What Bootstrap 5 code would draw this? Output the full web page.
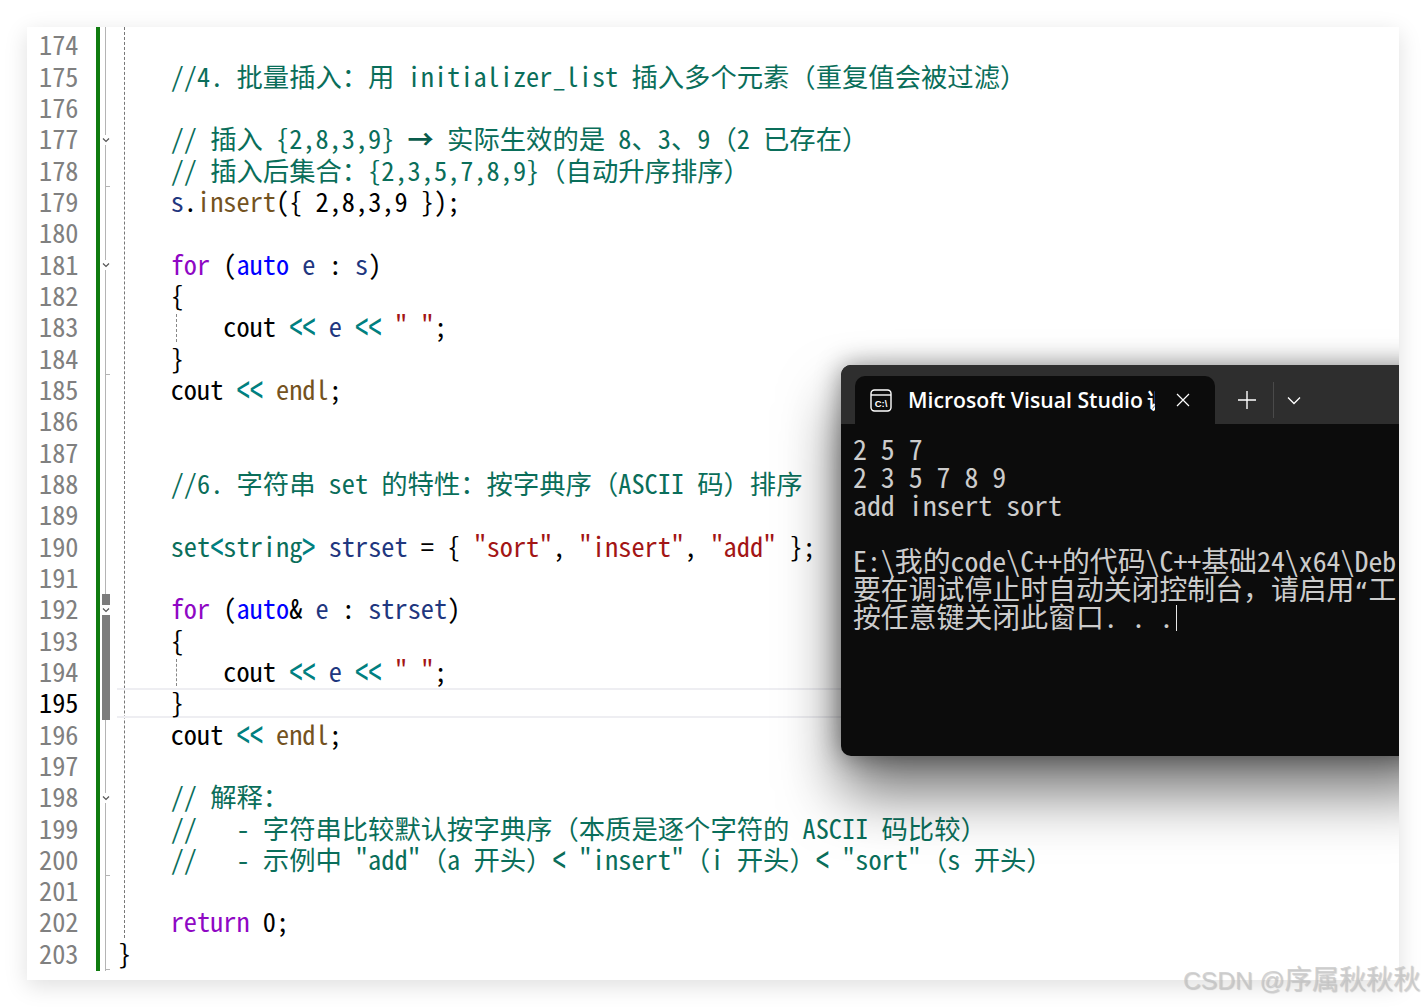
<!doctype html>
<html lang="zh"><head><meta charset="utf-8"><title>Code</title>
<link href="https://cdn.jsdelivr.net/npm/bootstrap@5.3.0/dist/css/bootstrap.min.css" rel="stylesheet">
<style>
html,body{background:#fff;overflow:hidden}
.shot{padding:27px;height:1007px;position:relative}
.pane{height:953px;position:relative;overflow:hidden;background:#fff}
.shade{box-shadow:0 6px 22px rgba(0,0,0,.13)}
.ed{font-family:"Noto Sans Mono CJK SC","DejaVu Sans Mono",monospace;font-size:26.34px;color:#000;height:944px}
.nums{width:69px;padding:3.3px 0 0 12px;color:#808080}
.nums div,.foldc div,.lines>div{height:31.33px;line-height:27.33px}
.nums .cur{color:#000}
.gbar{width:4px;background:#107c10}
.foldc{width:15px;margin-left:2px;padding-top:3.3px;background:linear-gradient(#b4b4b4,#b4b4b4) 3px 0/1px 100% no-repeat}
.foldc div{width:8px;position:relative}
.foldc .chg{background:#7c7c7c}
.foldc svg{position:absolute;left:0;top:10.6px;background:#fff;display:block}
.foldc .tick::after{content:"";position:absolute;left:3px;bottom:0;width:5px;height:1px;background:#b4b4b4}
.lines{flex:1;padding-top:3.3px;position:relative}
.lines>div{padding-left:1px;position:relative;white-space:pre}
.dash{position:absolute;left:7px;top:0;height:911px;border-left:1px dashed #777}
.guide::before{content:"";position:absolute;left:59px;top:2px;bottom:2px;border-left:1px dashed #888}
.lines>div.curl{height:30px;margin-bottom:1.33px;box-shadow:inset 0 2px 0 #eeeef2,inset 0 -2px 0 #eeeef2}
.cm{color:#0a6e5a}.kw{color:#8f08c4}.ty{color:#0000ff}.vn{color:#1f377f}.fn{color:#74531f}.st{color:#a31515}.op{color:#008080}
.chv{display:inline-block;transform:scaleY(1.55);transform-origin:50% 58%}
.arr{font-weight:700;color:#0a5c4c}
.term{position:absolute;left:814px;top:338px;width:600px;height:391px;background:#0c0c0c;border-radius:10px 0 0 10px;box-shadow:0 36px 60px rgba(0,0,0,.56),0 0 26px rgba(0,0,0,.42)}
.thead{height:59px;background:#2e2e2e;border-radius:10px 0 0 0;padding:11px 0 0 14px;color:#fff}
.ttab{width:360px;height:48px;background:#0c0c0c;border-radius:10px 10px 0 0;padding-left:15px}
.ttitle{width:247px;margin-left:16px;overflow:hidden;white-space:nowrap;font-family:"Open Sans",sans-serif;font-weight:600;font-size:21.2px}
.xclose{margin-left:21px}
.tplus{margin-left:22px}
.tsep{width:1px;height:36px;background:#4a4a4a;margin-left:16px}
.tmore{margin-left:13px}
.tbody{padding:10px 0 0 12px;font-family:"Noto Sans Mono CJK SC","DejaVu Sans Mono",monospace;font-size:27.86px;color:#cccccc;height:332px;overflow:hidden}
.tbody div{height:28px;line-height:28px;white-space:pre}
.lq{font-family:"DejaVu Sans Mono",monospace;font-size:23.14px}
.tcur{display:inline-block;width:1px;height:26px;background:#e8e8e8;vertical-align:top;margin:3px 0 0 3px}
.wmk{position:absolute;left:1183px;top:962px;font-family:"Liberation Sans","Noto Sans CJK SC",sans-serif;font-size:24.6px;line-height:36px;color:rgba(200,200,200,.8);text-shadow:1px 1px 1px rgba(0,0,0,.18);white-space:nowrap}
.wmk span{font-size:27.2px}
</style></head>
<body>
<main class="shot">
<div class="pane shade">
<div class="ed d-flex">
<div class="nums">
<div>174</div><div>175</div><div>176</div><div>177</div><div>178</div><div>179</div><div>180</div><div>181</div><div>182</div><div>183</div><div>184</div><div>185</div><div>186</div><div>187</div><div>188</div><div>189</div><div>190</div><div>191</div><div>192</div><div>193</div><div>194</div><div class="cur">195</div><div>196</div><div>197</div><div>198</div><div>199</div><div>200</div><div>201</div><div>202</div><div>203</div>
</div>
<div class="gbar"></div>
<div class="foldc">
<div></div><div></div><div></div>
<div><svg width="8" height="10" viewBox="0 0 8 10"><path d="M1 3.5 4 6.5 7 3.5" fill="none" stroke="#555" stroke-width="1.2"/></svg></div>
<div class="tick"></div><div></div><div></div>
<div><svg width="8" height="10" viewBox="0 0 8 10"><path d="M1 3.5 4 6.5 7 3.5" fill="none" stroke="#555" stroke-width="1.2"/></svg></div>
<div></div><div></div><div class="tick"></div>
<div></div><div></div><div></div><div></div><div></div><div></div><div></div>
<div class="chg"><svg width="8" height="10" viewBox="0 0 8 10"><path d="M1 3.5 4 6.5 7 3.5" fill="none" stroke="#555" stroke-width="1.2"/></svg></div>
<div class="chg"></div><div class="chg"></div><div class="chg"></div>
<div></div><div></div>
<div><svg width="8" height="10" viewBox="0 0 8 10"><path d="M1 3.5 4 6.5 7 3.5" fill="none" stroke="#555" stroke-width="1.2"/></svg></div>
<div></div><div class="tick"></div><div></div><div></div><div class="tick"></div>
</div>
<div class="lines">
<span class="dash"></span>
<div> </div>
<div>    <span class="cm">//4. 批量插入：用 initializer_list 插入多个元素（重复值会被过滤）</span></div>
<div> </div>
<div>    <span class="cm">// 插入 {2,8,3,9} <span class="arr">→</span> 实际生效的是 8、3、9（2 已存在）</span></div>
<div>    <span class="cm">// 插入后集合：{2,3,5,7,8,9}（自动升序排序）</span></div>
<div>    <span class="vn">s</span>.<span class="fn">insert</span>({ 2,8,3,9 });</div>
<div> </div>
<div>    <span class="kw">for</span> (<span class="ty">auto</span> <span class="vn">e</span> : <span class="vn">s</span>)</div>
<div>    {</div>
<div class="guide">        cout <span class="op chv">&lt;&lt;</span> <span class="vn">e</span> <span class="op chv">&lt;&lt;</span> <span class="st">" "</span>;</div>
<div>    }</div>
<div>    cout <span class="op chv">&lt;&lt;</span> <span class="fn">endl</span>;</div>
<div> </div>
<div> </div>
<div>    <span class="cm">//6. 字符串 set 的特性：按字典序（ASCII 码）排序</span></div>
<div> </div>
<div>    <span class="cm">set</span><span class="op chv">&lt;</span><span class="cm">string</span><span class="op chv">&gt;</span> <span class="vn">strset</span> = { <span class="st">"sort"</span>, <span class="st">"insert"</span>, <span class="st">"add"</span> };</div>
<div> </div>
<div>    <span class="kw">for</span> (<span class="ty">auto</span>&amp; <span class="vn">e</span> : <span class="vn">strset</span>)</div>
<div>    {</div>
<div class="guide">        cout <span class="op chv">&lt;&lt;</span> <span class="vn">e</span> <span class="op chv">&lt;&lt;</span> <span class="st">" "</span>;</div>
<div class="curl">    }</div>
<div>    cout <span class="op chv">&lt;&lt;</span> <span class="fn">endl</span>;</div>
<div> </div>
<div>    <span class="cm">// 解释：</span></div>
<div>    <span class="cm">//   - 字符串比较默认按字典序（本质是逐个字符的 ASCII 码比较）</span></div>
<div>    <span class="cm">//   - 示例中 "add"（a 开头）<span class="chv">&lt;</span> "insert"（i 开头）<span class="chv">&lt;</span> "sort"（s 开头）</span></div>
<div> </div>
<div>    <span class="kw">return</span> 0;</div>
<div>}</div>
</div>
</div>
<section class="term">
<div class="thead d-flex">
<div class="ttab d-flex align-items-center">
<svg width="22" height="23" viewBox="0 0 22 23"><rect x="1" y="1" width="20" height="21" rx="3.5" fill="none" stroke="#fff" stroke-width="1.4"/><path d="M1 6h20" stroke="#fff" stroke-width="1.4"/><text x="11" y="17.5" text-anchor="middle" font-family="Liberation Sans" font-weight="700" font-size="9.5" fill="#fff">C:\</text></svg>
<div class="ttitle">Microsoft Visual Studio 调试</div>
<svg class="xclose" width="14" height="14" viewBox="0 0 14 14"><path d="M1 1 13 13M13 1 1 13" stroke="#fff" stroke-width="1.2"/></svg>
</div>
<div class="d-flex align-items-center">
<svg class="tplus" width="20" height="20" viewBox="0 0 20 20"><path d="M10 1v18M1 10h18" stroke="#fff" stroke-width="1.4"/></svg>
<span class="tsep"></span>
<svg class="tmore" width="14" height="9" viewBox="0 0 14 9"><path d="M1 1.5 7 7.5 13 1.5" fill="none" stroke="#fff" stroke-width="1.3"/></svg>
</div>
</div>
<div class="tbody">
<div>2 5 7</div>
<div>2 3 5 7 8 9</div>
<div>add insert sort</div>
<div> </div>
<div>E:\我的code\C++的代码\C++基础24\x64\Deb</div>
<div>要在调试停止时自动关闭控制台，请启用<span class="lq">“</span>工</div>
<div>按任意键关闭此窗口. . .<span class="tcur"></span></div>
</div>
</section>
</div>
<div class="wmk">CSDN @<span>序属秋秋秋</span></div>
</main>
<script src="https://cdn.jsdelivr.net/npm/bootstrap@5.3.0/dist/js/bootstrap.bundle.min.js"></script>
</body></html>
